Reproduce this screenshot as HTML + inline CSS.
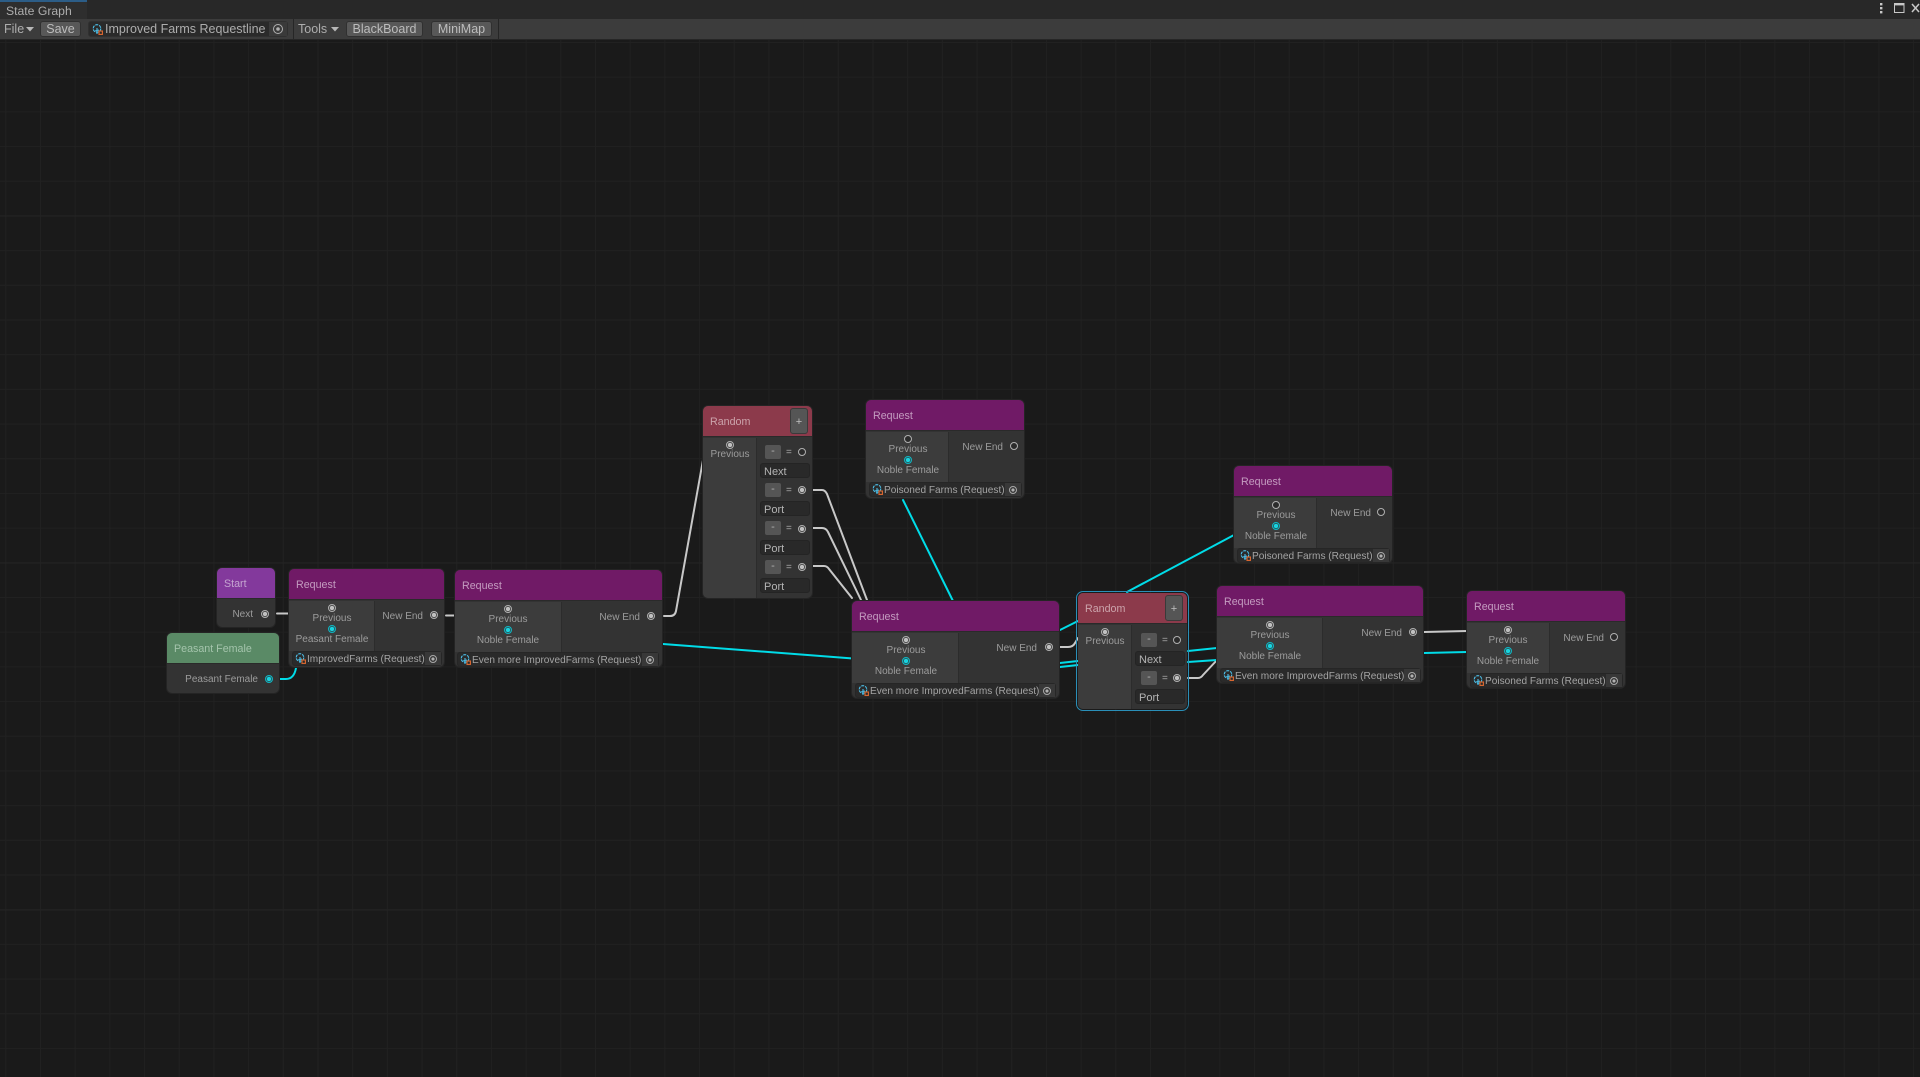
<!DOCTYPE html>
<html><head><meta charset="utf-8"><title>State Graph</title>
<style>
html,body{margin:0;padding:0;width:1920px;height:1077px;overflow:hidden;background:#1a1a1a;font-family:"Liberation Sans",sans-serif}
*{box-sizing:border-box}
#grid{position:absolute;left:0;top:39px;width:1920px;height:1038px;background-color:#1a1a1a;background-image:linear-gradient(to bottom,#242424 1px,transparent 1px),linear-gradient(to right,#212121 1px,transparent 1px),linear-gradient(to bottom,#212121 1px,transparent 1px);background-size:347px 347px,34.7px 34.7px,34.7px 34.7px;background-position:0 176.5px,5.3px 3px,5.3px 3px}
#bar{position:absolute;left:0;top:0;width:1920px;height:19px;background:#282828}
#tab{position:absolute;left:0;top:0;width:87px;height:19px;background:#2e2e2e;border-top:2px solid #2c5d87;color:#adadad;font-size:12.2px;line-height:18px;padding-left:6px}
#tb{position:absolute;left:0;top:19px;width:1920px;height:21px;background:#3c3c3c;border-bottom:1px solid #262626;color:#adadad;font-size:12.5px}
.a{position:absolute;white-space:nowrap}
.btn{position:absolute;top:2px;height:16px;background:#585858;border:1px solid #303030;border-radius:3px;text-align:center;line-height:15px;color:#bcbcbc}
svg{position:absolute;overflow:visible}
.n{position:absolute;background:#333;border-radius:5px;overflow:hidden;color:#9c9c9c;font-size:10px;box-shadow:0 0 0 1px #242424}
.n div{position:absolute;white-space:nowrap}
.h{left:0;top:0;width:100%;height:31px;border-bottom:1px solid #2a2a2a;font-size:10.7px;line-height:33px;padding-left:7px}
.rq{background:#701a66;color:#c49cc0}
.rd{background:#8c3a4b;color:#cca4ac}
.st{background:#83399c;color:#c4a4d0}
.ps{background:#5a8a66;color:#a4c4ac}
.l{left:0;top:32px;background:#3c3c3c;border-right:1px solid #2c2c2c}
.ct{text-align:center;line-height:12px;transform:translate(-50%,1px)}
.p{width:8px;height:8px;border-radius:50%;transform:translate(-50%,-50%);border:1px solid #b0b0b0;background:radial-gradient(circle,#c0c0c0 0 2px,#3a3a3a 2.4px)}
.c{border-color:#10b8c4;background:radial-gradient(circle,#18d4e0 0 2px,#2a4a50 2.4px)}
.e{background:#2b2b2b}
.o{top:82px;height:15px;background:#2a2a2a;border-radius:3px;border:1px solid #262626;color:#a4a4a4;line-height:15px;padding-left:14px;font-size:10.1px}
.ob{top:0;right:0;width:16px;height:13px;background:#383838}
.t{width:8px;height:8px;border-radius:50%;border:1px solid #a8a8a8;top:2.5px;left:4px;background:radial-gradient(circle,#b0b0b0 0 1.4px,transparent 1.8px)}
.m{width:16px;height:14px;background:#555;border-radius:2px;color:#b0b0b0;text-align:center;line-height:13px;font-size:11px}
.f{width:50px;height:15px;background:#292929;border-radius:3px;border:1px solid #242424;color:#b4b4b4;line-height:16px;padding-left:3px;font-size:11px}
.eq{font-size:10px;line-height:14px;color:#a8a8a8}
.pl{left:87px;top:2px;width:18px;height:26px;background:#555;border:1px solid #3a3a3a;border-radius:3px;color:#c0c0c0;text-align:center;line-height:26px;font-size:11px}
.ic{left:2px;top:1px;width:11px;height:11px}
</style></head><body>
<div id="grid"></div>

<svg style="left:0;top:0" width="1920" height="1077" fill="none" stroke-width="2" stroke-linejoin="round" stroke-linecap="round">
<g stroke="#c8c8c8">
<path d="M277 613.5H288"/>
<path d="M446 615.5H455"/>
<path d="M664 616H670Q675 616 676 611L703 460"/>
<path d="M813 490H822Q825 490 827 494L867 600"/>
<path d="M813 528H822Q826 528 828 532L861 600"/>
<path d="M813 566H824Q827 566 829 569L852 598"/>
<path d="M1060 647H1068Q1073 647 1075 643L1078 638"/>
<path d="M1188 678H1198Q1201 678 1203 675L1217 660"/>
<path d="M1424 632L1467 631"/>
</g>
<g stroke="#00dce8">
<path d="M280 679H286Q294 679 296 668"/>
<path d="M663 644L853 658.5"/>
<path d="M903 500L953 601"/>
<path d="M1060 630L1078 621"/>
<path d="M1060 663L1078 661"/>
<path d="M1060 667L1078 665"/>
<path d="M1188 651L1217 648"/>
<path d="M1188 662L1217 660"/>
<path d="M1424 653L1467 652"/>
<path d="M1127 592L1234 535"/>
</g>
</svg>

<svg width="0" height="0" style="left:0;top:0"><defs>
<g id="i" fill="none" stroke-width="1.1">
<circle cx="5" cy="4.5" r="3.8" stroke="#4cc0ea" stroke-dasharray="3 1"/>
<path d="M5 4V10M3 7L7 6" stroke="#4cc0ea"/>
<rect x="7" y="7" width="3.4" height="3.4" stroke="#e06a30"/>
</g></defs></svg>

<div id="bar"></div>
<div id="tab">State Graph</div>
<svg style="left:0;top:0" width="1920" height="19" fill="none" stroke="#c8c8c8">
<g fill="#c8c8c8" stroke="none"><rect x="1880" y="3" width="2.4" height="2.4"/><rect x="1880" y="7" width="2.4" height="2.4"/><rect x="1880" y="11" width="2.4" height="2.4"/></g>
<rect x="1894.5" y="3.5" width="9.5" height="9" stroke="#c8c8c8"/><rect x="1894" y="3" width="10" height="2.4" fill="#c8c8c8" stroke="none"/>
<path d="M1912 4L1919 12M1919 4L1912 12" stroke-width="1.5"/>
</svg>

<div id="tb">
<div class="a" style="left:4px;top:2px;line-height:17px">File</div>
<svg style="left:26px;top:8px" width="8" height="5"><path d="M0 0H8L4 4.5Z" fill="#b8b8b8"/></svg>
<div class="btn" style="left:40px;width:41px">Save</div>
<div class="a" style="left:88px;top:2px;width:200px;height:16px;background:#2a2a2a;border:1px solid #303030;border-radius:3px"></div>
<div class="a" style="left:269px;top:3px;width:18px;height:14px;background:#3a3a3a"></div>
<svg style="left:92px;top:5px" width="12" height="12"><use href="#i"/></svg>
<div class="a" style="left:105px;top:2px;line-height:17px">Improved Farms Requestline</div>
<svg style="left:272px;top:4px" width="12" height="12" fill="none"><circle cx="6" cy="6" r="4.5" stroke="#b0b0b0"/><circle cx="6" cy="6" r="1.8" fill="#b0b0b0"/></svg>
<div class="a" style="left:293px;top:0;width:1px;height:20px;background:#262626"></div>
<div class="a" style="left:298px;top:2px;line-height:17px">Tools</div>
<svg style="left:331px;top:8px" width="8" height="5"><path d="M0 0H8L4 4.5Z" fill="#b8b8b8"/></svg>
<div class="btn" style="left:346px;width:77px">BlackBoard</div>
<div class="btn" style="left:431px;width:61px">MiniMap</div>
<div class="a" style="left:498px;top:0;width:1px;height:20px;background:#262626"></div>
</div>

<!-- Start -->
<div class="n" style="left:217px;top:568px;width:58px;height:59px">
<div class="h st" style="width:100%">Start</div>
<div style="right:22px;top:40px;line-height:13px">Next</div>
<div class="p" style="left:48px;top:46px"></div>
</div>

<!-- Peasant Female -->
<div class="n" style="left:167px;top:633px;width:112px;height:60px">
<div class="h ps">Peasant Female</div>
<div style="right:21px;top:40px;line-height:13px">Peasant Female</div>
<div class="p c" style="left:102px;top:46px"></div>
</div>

<!-- Request 1 -->
<div class="n" style="left:289px;top:569px;width:155px;height:98px">
<div class="h rq">Request</div>
<div class="l" style="width:86px;height:50px"></div>
<div class="p" style="left:43px;top:39px"></div>
<div class="ct" style="left:43px;top:43px">Previous</div>
<div class="p c" style="left:43px;top:60px"></div>
<div class="ct" style="left:43px;top:64px">Peasant Female</div>
<div style="right:21px;top:41px;line-height:13px">New End</div>
<div class="p" style="left:145px;top:46px"></div>
<div class="o" style="left:3px;width:150px"><svg class="ic" viewBox="0 0 11 11"><use href="#i"/></svg>ImprovedFarms (Request)<div class="ob"><div class="t"></div></div></div>
</div>

<!-- Request 2 -->
<div class="n" style="left:455px;top:570px;width:207px;height:97px">
<div class="h rq">Request</div>
<div class="l" style="width:107px;height:50px"></div>
<div class="p" style="left:53px;top:39px"></div>
<div class="ct" style="left:53px;top:43px">Previous</div>
<div class="p c" style="left:53px;top:60px"></div>
<div class="ct" style="left:53px;top:64px">Noble Female</div>
<div style="right:22px;top:41px;line-height:13px">New End</div>
<div class="p" style="left:196px;top:46px"></div>
<div class="o" style="left:2px;width:202px"><svg class="ic" viewBox="0 0 11 11"><use href="#i"/></svg>Even more ImprovedFarms (Request)<div class="ob"><div class="t"></div></div></div>
</div>

<!-- Random 1 -->
<div class="n" style="left:703px;top:406px;width:109px;height:192px">
<div class="h rd">Random</div>
<div class="pl">+</div>
<div class="l" style="width:54px;height:160px"></div>
<div class="p" style="left:27px;top:39px"></div>
<div class="ct" style="left:27px;top:42px">Previous</div>
<div class="m" style="left:62px;top:39px">-</div><div class="eq" style="left:83px;top:40px">=</div><div class="p e" style="left:99px;top:46px"></div>
<div class="f" style="left:57px;top:57px">Next</div>
<div class="m" style="left:62px;top:77px">-</div><div class="eq" style="left:83px;top:78px">=</div><div class="p" style="left:99px;top:84px"></div>
<div class="f" style="left:57px;top:95px">Port</div>
<div class="m" style="left:62px;top:115px">-</div><div class="eq" style="left:83px;top:116px">=</div><div class="p" style="left:99px;top:122.5px"></div>
<div class="f" style="left:57px;top:134px">Port</div>
<div class="m" style="left:62px;top:154px">-</div><div class="eq" style="left:83px;top:155px">=</div><div class="p" style="left:99px;top:160.5px"></div>
<div class="f" style="left:57px;top:172px">Port</div>
</div>

<!-- Request top poison -->
<div class="n" style="left:866px;top:400px;width:158px;height:98px">
<div class="h rq">Request</div>
<div class="l" style="width:83px;height:50px"></div>
<div class="p e" style="left:42px;top:39px"></div>
<div class="ct" style="left:42px;top:43px">Previous</div>
<div class="p c" style="left:42px;top:60px"></div>
<div class="ct" style="left:42px;top:64px">Noble Female</div>
<div style="right:21px;top:41px;line-height:13px">New End</div>
<div class="p e" style="left:148px;top:46px"></div>
<div class="o" style="left:3px;width:153px"><svg class="ic" viewBox="0 0 11 11"><use href="#i"/></svg>Poisoned Farms (Request)<div class="ob"><div class="t"></div></div></div>
</div>

<!-- Request center -->
<div class="n" style="left:852px;top:601px;width:207px;height:97px">
<div class="h rq">Request</div>
<div class="l" style="width:107px;height:50px"></div>
<div class="p" style="left:54px;top:39px"></div>
<div class="ct" style="left:54px;top:43px">Previous</div>
<div class="p c" style="left:54px;top:60px"></div>
<div class="ct" style="left:54px;top:64px">Noble Female</div>
<div style="right:22px;top:41px;line-height:13px">New End</div>
<div class="p" style="left:197px;top:46px"></div>
<div class="o" style="left:3px;width:201px"><svg class="ic" viewBox="0 0 11 11"><use href="#i"/></svg>Even more ImprovedFarms (Request)<div class="ob"><div class="t"></div></div></div>
</div>

<!-- Random 2 selected -->
<div class="a" style="left:1076px;top:591px;width:113px;height:120px;border:1.5px solid #2a8fb8;border-radius:7px"></div>
<div class="n" style="left:1078px;top:593px;width:109px;height:116px;box-shadow:none">
<div class="h rd">Random</div>
<div class="pl" style="line-height:27px">+</div>
<div class="l" style="width:54px;height:84px"></div>
<div class="p" style="left:27px;top:39px"></div>
<div class="ct" style="left:27px;top:42px">Previous</div>
<div class="m" style="left:63px;top:40px">-</div><div class="eq" style="left:84px;top:41px">=</div><div class="p e" style="left:99px;top:47px"></div>
<div class="f" style="left:57px;top:58px">Next</div>
<div class="m" style="left:63px;top:78px">-</div><div class="eq" style="left:84px;top:79px">=</div><div class="p" style="left:99px;top:85px"></div>
<div class="f" style="left:57px;top:96px">Port</div>
</div>

<!-- Request 5 -->
<div class="n" style="left:1217px;top:586px;width:206px;height:97px">
<div class="h rq">Request</div>
<div class="l" style="width:106px;height:50px"></div>
<div class="p" style="left:53px;top:39px"></div>
<div class="ct" style="left:53px;top:43px">Previous</div>
<div class="p c" style="left:53px;top:60px"></div>
<div class="ct" style="left:53px;top:64px">Noble Female</div>
<div style="right:21px;top:41px;line-height:13px">New End</div>
<div class="p" style="left:196px;top:46px"></div>
<div class="o" style="left:3px;width:201px"><svg class="ic" viewBox="0 0 11 11"><use href="#i"/></svg>Even more ImprovedFarms (Request)<div class="ob"><div class="t"></div></div></div>
</div>

<!-- Request right top -->
<div class="n" style="left:1234px;top:466px;width:158px;height:97px">
<div class="h rq">Request</div>
<div class="l" style="width:83px;height:50px"></div>
<div class="p e" style="left:42px;top:39px"></div>
<div class="ct" style="left:42px;top:43px">Previous</div>
<div class="p c" style="left:42px;top:60px"></div>
<div class="ct" style="left:42px;top:64px">Noble Female</div>
<div style="right:21px;top:41px;line-height:13px">New End</div>
<div class="p e" style="left:147px;top:46px"></div>
<div class="o" style="left:3px;width:153px"><svg class="ic" viewBox="0 0 11 11"><use href="#i"/></svg>Poisoned Farms (Request)<div class="ob"><div class="t"></div></div></div>
</div>

<!-- Request far right -->
<div class="n" style="left:1467px;top:591px;width:158px;height:97px">
<div class="h rq">Request</div>
<div class="l" style="width:83px;height:50px"></div>
<div class="p" style="left:41px;top:39px"></div>
<div class="ct" style="left:41px;top:43px">Previous</div>
<div class="p c" style="left:41px;top:60px"></div>
<div class="ct" style="left:41px;top:64px">Noble Female</div>
<div style="right:21px;top:41px;line-height:13px">New End</div>
<div class="p e" style="left:147px;top:46px"></div>
<div class="o" style="left:3px;width:153px"><svg class="ic" viewBox="0 0 11 11"><use href="#i"/></svg>Poisoned Farms (Request)<div class="ob"><div class="t"></div></div></div>
</div>
</body></html>
